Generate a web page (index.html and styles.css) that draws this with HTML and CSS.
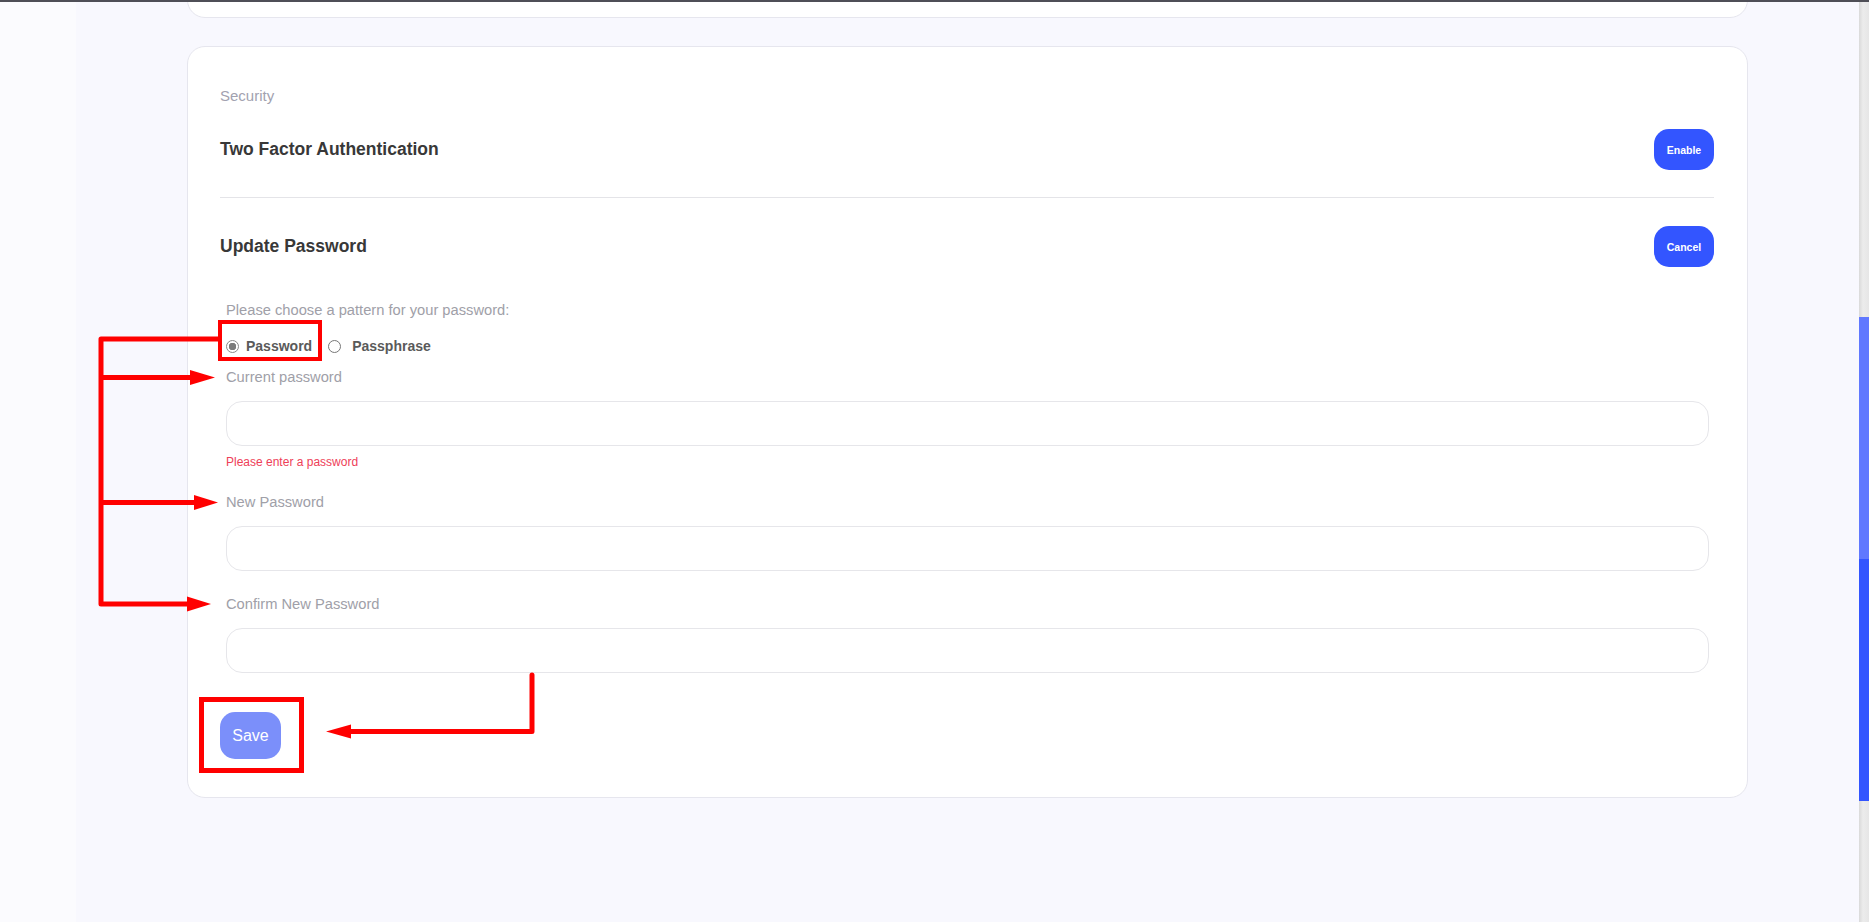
FILE: index.html
```html
<!DOCTYPE html>
<html>
<head>
  <meta charset="UTF-8">
  <title>Account settings - Security</title>
  <link rel="stylesheet" href="styles.css">
</head>
<body>
<div class="topbar"></div>
<div class="frame">
  <aside class="rail"></aside>
  <main class="content">
    <section class="card card-prev"></section>
    <section class="card">
      <div class="section-label">Security</div>
      <div class="setting-row first">
        <h3>Two Factor Authentication</h3>
        <button class="btn-pill" type="button">Enable</button>
      </div>
      <div class="setting-row">
        <h3>Update Password</h3>
        <button class="btn-pill" type="button">Cancel</button>
      </div>
      <form class="password-form">
        <div class="fields">
          <div class="hint">Please choose a pattern for your password:</div>
          <div class="radio-row">
            <label class="radio-opt"><input type="radio" name="pattern" checked> <span>Password</span></label>
            <label class="radio-opt second"><input type="radio" name="pattern"> <span>Passphrase</span></label>
          </div>
          <div class="field">
            <label class="field-label">Current password</label>
            <input class="field-input" type="password">
            <div class="field-error">Please enter a password</div>
          </div>
          <div class="field">
            <label class="field-label">New Password</label>
            <input class="field-input" type="password">
          </div>
          <div class="field last">
            <label class="field-label">Confirm New Password</label>
            <input class="field-input" type="password">
          </div>
        </div>
        <button class="btn-save" type="button">Save</button>
      </form>
    </section>
  </main>
  <div class="scrollbar">
    <div class="thumb thumb-light"></div>
    <div class="thumb thumb-dark"></div>
  </div>
</div>

<!-- red review annotations drawn over the page -->
<svg class="annotations" width="1869" height="922" viewBox="0 0 1869 922">
  <g fill="none" stroke="#ff0000">
    <rect x="220" y="322" width="100" height="37" stroke-width="4"/>
    <rect x="201.5" y="699.5" width="100" height="71" stroke-width="5"/>
    <path d="M218 339 H101 V604 H189" stroke-width="5" stroke-linejoin="round"/>
    <path d="M101 377.5 H191" stroke-width="5"/>
    <path d="M101 502.5 H195" stroke-width="5"/>
    <path d="M532 675 V731.5 H349" stroke-width="5" stroke-linecap="round" stroke-linejoin="round"/>
  </g>
  <g fill="#ff0000">
    <polygon points="190,370 215,377.5 190,385"/>
    <polygon points="194,495 218,502.5 194,510"/>
    <polygon points="187,596.5 211,604 187,611.5"/>
    <polygon points="351,724.5 326,731.5 351,738.5"/>
  </g>
</svg>
</body>
</html>
```

FILE: styles.css
```css
body {
  margin: 0;
  padding: 0;
  font-family: 'Liberation Sans', Arial, sans-serif;
  background: #f8f8fe;
  position: relative;
  height: 922px;
  overflow: hidden;
}
.topbar {
  height: 2px;
  background: #4f4f57;
}
.frame {
  display: flex;
  height: 920px;
}
.rail {
  width: 76px;
  flex: none;
  background: #fbfbfe;
}
.content {
  flex: 1;
  padding: 0 111px;
  background: #f8f8fe;
  overflow: hidden;
}
.card {
  background: #fff;
  border: 1px solid #e6e6ee;
  border-radius: 18px;
  margin-top: 28px;
  padding: 39px 33px 38px 32px;
}
/* card above, scrolled mostly out of view */
.card-prev {
  height: 0;
  padding: 0;
  min-height: 58px;
  margin-top: -44px;
}
.section-label {
  font-size: 15px;
  line-height: 20px;
  color: #a2a2b0;
}
.setting-row {
  display: flex;
  justify-content: space-between;
  align-items: center;
  padding-top: 28px;
}
.setting-row.first {
  padding: 23px 0 27px 0;
  border-bottom: 1px solid #e4e4e8;
}
.setting-row h3 {
  margin: 0;
  font-size: 17.5px;
  font-weight: bold;
  color: #383838;
}
.btn-pill {
  width: 60px;
  height: 41px;
  border: none;
  border-radius: 15px;
  background: #3355ff;
  color: #fff;
  font-family: inherit;
  font-size: 10.5px;
  font-weight: bold;
  padding: 0;
}
.fields {
  padding: 0 5px 0 6px;
}
.hint {
  margin-top: 34px;
  font-size: 14.7px;
  line-height: 18px;
  color: #a0a0a8;
}
.radio-row {
  margin-top: 17px;
  height: 20px;
  display: flex;
  align-items: center;
}
.radio-opt {
  display: flex;
  align-items: center;
  font-size: 14px;
  font-weight: bold;
  color: #5a5a5a;
}
.radio-opt input {
  appearance: none;
  -webkit-appearance: none;
  width: 13px;
  height: 13px;
  margin: 0 7px 0 0;
  border: 1px solid #777;
  border-radius: 50%;
  background: #fff;
}
.radio-opt input:checked {
  border-color: #8a8a8a;
  background: radial-gradient(circle, #7c7c7c 0 3.5px, #fff 4px);
}
.radio-opt.second {
  margin-left: 16px;
}
.radio-opt.second input {
  margin-right: 11px;
}
.field-label {
  display: block;
  margin-top: 12px;
  font-size: 14.7px;
  line-height: 18px;
  color: #a0a0a8;
}
.field + .field .field-label {
  margin-top: 24px;
}
.field-input {
  display: block;
  box-sizing: border-box;
  width: 100%;
  height: 45px;
  margin-top: 15px;
  border: 1px solid #e6e6ea;
  border-radius: 16px;
  background: #fff;
  outline: none;
}
.field-error {
  margin: 9px 0 5px 0;
  font-size: 12px;
  line-height: 14px;
  color: #ee4058;
}
.btn-save {
  margin-top: 39px;
  width: 61px;
  height: 47px;
  border: none;
  border-radius: 15px;
  background: #7b8ffa;
  color: #fff;
  font-family: inherit;
  font-size: 16px;
  padding: 0;
}
.scrollbar {
  width: 10px;
  flex: none;
  background: linear-gradient(90deg, #d9d9d9, #ececec 40%, #e6e6e6);
  padding-top: 315px;
}
.thumb {
  height: 242px;
}
.thumb-light {
  background: #6078ff;
}
.thumb-dark {
  background: #3355ff;
}
.annotations {
  position: absolute;
  left: 0;
  top: 0;
  pointer-events: none;
}
```
